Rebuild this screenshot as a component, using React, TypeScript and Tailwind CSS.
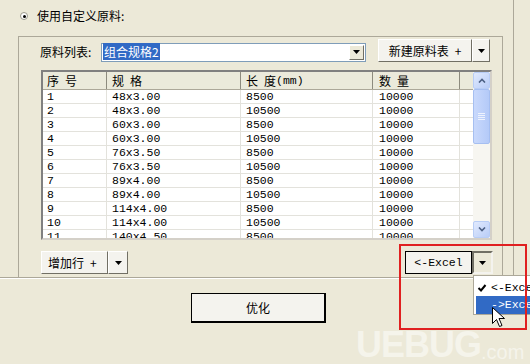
import React from "react";

const rows: [string, string, string, string][] = [
  ["1", "48x3.00", "8500", "10000"],
  ["2", "48x3.00", "10500", "10000"],
  ["3", "60x3.00", "8500", "10000"],
  ["4", "60x3.00", "10500", "10000"],
  ["5", "76x3.50", "8500", "10000"],
  ["6", "76x3.50", "10500", "10000"],
  ["7", "89x4.00", "8500", "10000"],
  ["8", "89x4.00", "10500", "10000"],
  ["9", "114x4.00", "8500", "10000"],
  ["10", "114x4.00", "10500", "10000"],
  ["11", "140x4.50", "8500", "10000"],
];

const cjk = { fontFamily: '"Noto Sans CJK SC", "Liberation Sans", sans-serif' };
const mono = { fontFamily: '"Liberation Mono", "Noto Sans CJK SC", monospace' };

function Caret() {
  return (
    <svg width="7" height="4" viewBox="0 0 7 4">
      <path d="M0 0h7L3.5 4z" fill="#000" />
    </svg>
  );
}

function ScrollArrow({ up }: { up?: boolean }) {
  return (
    <div className="h-[17px] w-[17px] rounded-[2px] border border-[#b8cdf6] bg-gradient-to-br from-[#e1eafe] to-[#b9cdf7] flex items-center justify-center">
      <svg width="8" height="5" viewBox="0 0 8 5">
        <path d={up ? "M1 4.5 4 1.5 7 4.5" : "M1 0.5 4 3.5 7 0.5"} stroke="#4d6185" strokeWidth="1.6" fill="none" />
      </svg>
    </div>
  );
}

function HeaderText({ a, b, mm }: { a: string; b: string; mm?: boolean }) {
  return (
    <span className="flex items-center">
      <span>{a}</span>
      <span className="ml-[6px]">{b}</span>
      {mm && (
        <span className="text-[11.5px]" style={mono}>
          (mm)
        </span>
      )}
    </span>
  );
}

export default function App() {
  return (
    <div className="relative w-[530px] h-[364px] overflow-hidden bg-[#ece9d8] text-[12px] text-black" style={cjk}>
      {/* top panel */}
      <div className="w-[514px] h-[278px] border-r border-b border-[#aca899] flex flex-col">
        <div className="h-[36px] flex items-start pt-[8px] pl-[20px] gap-[9px]">
          <div className="mt-[4px] w-[8px] h-[8px] rounded-full border border-[#9c9a8c] bg-white flex items-center justify-center">
            <div className="w-[3px] h-[3px] rounded-full bg-black" />
          </div>
          <span className="leading-[16px]">使用自定义原料:</span>
        </div>
        {/* group box */}
        <div className="ml-[18px] w-[485px] flex-1 border-t border-l border-r border-[#aca899] flex flex-col">
          <div className="mt-[2px] h-[23px] flex items-center pl-[21px]">
            <span className="w-[61px] leading-[16px] mt-[2px]">原料列表:</span>
            <div className="mt-[3px] h-[19px] w-[265px] border border-[#7f9db9] bg-white flex items-center">
              <div className="flex-1 pl-[1px]">
                <span className="bg-[#316ac5] text-white px-[1px] leading-[15px]">组合规格2</span>
              </div>
              <div className="mr-[1px] h-[15px] w-[15px] border border-t-white border-l-white border-r-[#716f64] border-b-[#716f64] bg-[#ece9d8] flex items-center justify-center">
                <Caret />
              </div>
            </div>
            <div className="ml-[12px] flex h-[23px]">
              <div className="w-[94px] h-full border border-t-white border-l-white border-r-[#716f64] border-b-[#716f64] bg-[#f4f3ee] flex items-center justify-center gap-[6px]">
                <span>新建原料表</span>
                <span>+</span>
              </div>
              <div className="w-[18px] h-full border border-t-white border-l-white border-r-[#716f64] border-b-[#716f64] bg-[#f4f3ee] flex items-center justify-center">
                <Caret />
              </div>
            </div>
          </div>

          {/* list view */}
          <div className="mt-[8px] ml-[22px] w-[451px] h-[170px] border-2 border-t-[#808080] border-l-[#808080] border-r-[#d4d0c8] border-b-[#d4d0c8] bg-white flex">
            <div className="w-[430px] h-full overflow-hidden flex flex-col">
              <div className="h-[18px] shrink-0 flex bg-[#ebeadb] border-b border-[#aca899] leading-[14px]">
                <div className="w-[64px] shrink-0 h-full pl-[4px] border-r border-[#8d8b7e] flex items-center">
                  <HeaderText a="序" b="号" />
                </div>
                <div className="w-[134px] shrink-0 h-full pl-[5px] border-r border-[#8d8b7e] flex items-center">
                  <HeaderText a="规" b="格" />
                </div>
                <div className="w-[132px] shrink-0 h-full pl-[5px] border-r border-[#8d8b7e] flex items-center">
                  <HeaderText a="长" b="度" mm />
                </div>
                <div className="w-[87px] shrink-0 h-full pl-[6px] border-r border-[#8d8b7e] flex items-center">
                  <HeaderText a="数" b="量" />
                </div>
                <div className="w-[13px] shrink-0 h-full" />
              </div>
              {rows.map((r, i) => (
                <div key={i} className="h-[14px] shrink-0 flex border-b border-[#e3e2dc] text-[11.5px] leading-[14px]" style={mono}>
                  <div className="w-[64px] shrink-0 pl-[4px] border-r border-[#e3e2dc]">{r[0]}</div>
                  <div className="w-[134px] shrink-0 pl-[5px] border-r border-[#e3e2dc]">{r[1]}</div>
                  <div className="w-[132px] shrink-0 pl-[5px] border-r border-[#e3e2dc]">{r[2]}</div>
                  <div className="w-[87px] shrink-0 pl-[6px] border-r border-[#e3e2dc]">{r[3]}</div>
                  <div className="w-[13px] shrink-0" />
                </div>
              ))}
            </div>
            {/* scrollbar */}
            <div className="w-[17px] h-full bg-[#f7f6f1] flex flex-col justify-between">
              <div className="flex flex-col">
                <ScrollArrow up />
                <div className="h-[55px] w-[17px] rounded-[2px] border border-[#a6bff1] bg-gradient-to-r from-[#c9d9fc] to-[#b4caf8] flex items-center justify-center">
                  <div className="flex flex-col gap-[1px]">
                    <div className="w-[7px] h-[1px] bg-[#eef3fd]" />
                    <div className="w-[7px] h-[1px] bg-[#eef3fd]" />
                    <div className="w-[7px] h-[1px] bg-[#eef3fd]" />
                    <div className="w-[7px] h-[1px] bg-[#eef3fd]" />
                  </div>
                </div>
              </div>
              <ScrollArrow />
            </div>
          </div>

          {/* bottom buttons */}
          <div className="mt-[11px] h-[23px] flex pl-[22px] pr-[9px]">
            <div className="flex">
              <div className="w-[67px] h-full border border-t-white border-l-white border-r-[#716f64] border-b-[#716f64] bg-[#f4f3ee] flex items-center pl-[6px] gap-[6px]">
                <span>增加行</span>
                <span>+</span>
              </div>
              <div className="w-[20px] h-full border border-t-white border-l-white border-r-[#716f64] border-b-[#716f64] bg-[#f4f3ee] flex items-center justify-center">
                <Caret />
              </div>
            </div>
            <div className="ml-auto flex">
              <div className="w-[67px] h-full border border-black bg-[#f4f3ee] flex items-center justify-center text-[11.5px]" style={mono}>
                &lt;-Excel
              </div>
              <div className="w-[21px] h-full border-2 border-t-[#716f64] border-l-[#716f64] border-r-[#f4f3ee] border-b-[#f4f3ee] bg-[#ece9d8] flex items-center justify-center">
                <Caret />
              </div>
            </div>
          </div>
        </div>
      </div>

      {/* bottom area */}
      <div className="border-t border-white pt-[14px] pl-[191px]">
        <div className="w-[135px] h-[30px] border border-black border-r-2 border-b-2 bg-[#f4f3ee] flex items-center justify-center">
          优化
        </div>
      </div>

      {/* watermark */}
      <div className="absolute left-[356px] top-[328px] flex items-end text-white/50 font-bold" style={{ fontFamily: '"Liberation Sans", sans-serif' }}>
        <span className="text-[36px] leading-[34px] tracking-[-1px]">UEBUG</span>
        <span className="text-[20px] leading-[20px] font-normal">.com</span>
      </div>

      {/* dropdown menu */}
      <div className="absolute left-[473px] top-[275px] w-[90px] h-[40px] bg-white border border-[#aca899] flex flex-col pt-[3px] text-[11.5px]" style={mono}>
        <div className="h-[17px] flex items-center pl-[3px]">
          <svg width="10" height="10" viewBox="0 0 10 10" className="mr-[4px]">
            <path d="M1.5 5 4 7.5 8.5 2" stroke="#000" strokeWidth="2" fill="none" />
          </svg>
          &lt;-Excel
        </div>
        <div className="h-[18px] ml-[2px] bg-[#316ac5] text-white flex items-center pl-[15px]">-&gt;Excel</div>
      </div>

      {/* cursor */}
      <svg className="absolute left-[492px] top-[307px]" width="13" height="21" viewBox="0 0 13 21">
        <path d="M0.5 0.5v16l4-4 3 7 2.5-1-3-7h5.5z" fill="#fff" stroke="#000" strokeWidth="1" />
      </svg>

      {/* red highlight box */}
      <div className="absolute left-[399px] top-[244px] w-[128px] h-[86px] border-2 border-[#e02020]" />
    </div>
  );
}
